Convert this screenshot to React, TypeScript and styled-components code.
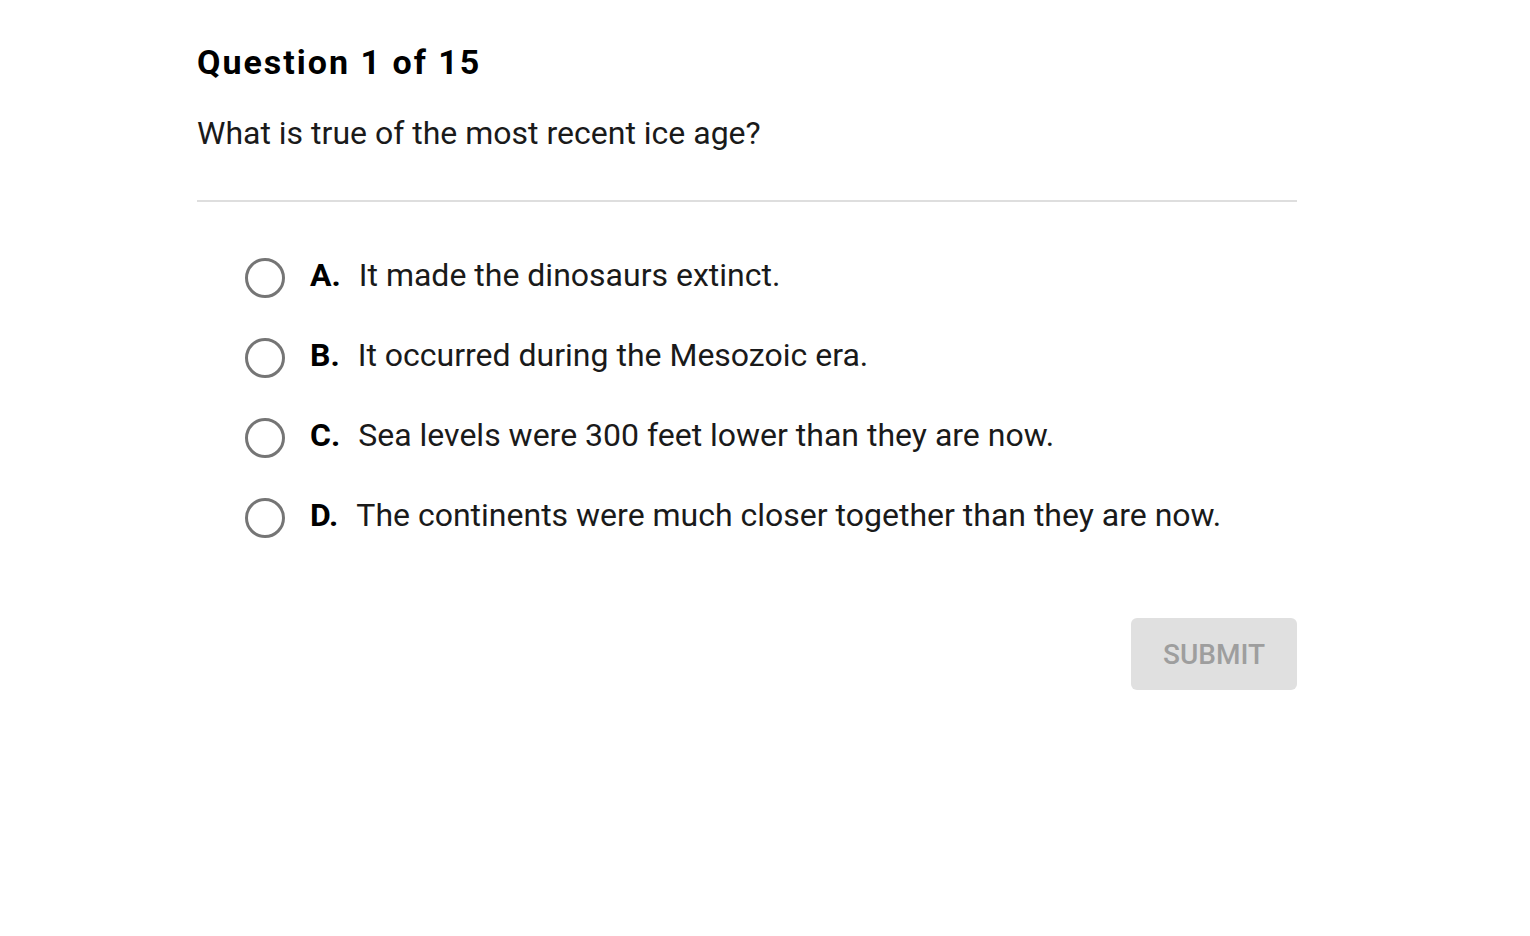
import styled, { createGlobalStyle } from "styled-components";

const options = [
  { letter: "A.", text: "It made the dinosaurs extinct." },
  { letter: "B.", text: "It occurred during the Mesozoic era." },
  { letter: "C.", text: "Sea levels were 300 feet lower than they are now." },
  { letter: "D.", text: "The continents were much closer together than they are now." },
];

function App() {
  return (
    <>
      <GlobalStyle />
      <Page>
        <Title>Question 1 of 15</Title>
        <Prompt>What is true of the most recent ice age?</Prompt>
        <Divider />
        <OptionList>
          {options.map((option) => (
            <Option key={option.letter}>
              <Radio />
              <Letter>{option.letter}</Letter>
              <OptionText>{option.text}</OptionText>
            </Option>
          ))}
        </OptionList>
        <Footer>
          <SubmitButton disabled>SUBMIT</SubmitButton>
        </Footer>
      </Page>
    </>
  );
}

const GlobalStyle = createGlobalStyle`
  body {
    margin: 0;
    background: #ffffff;
    font-family: Roboto, "Liberation Sans", sans-serif;
    color: #1a1a1a;
  }
`;

const Page = styled.div`
  width: 1100px;
  margin-left: 197px;
  padding-top: 40px;
  display: flex;
  flex-direction: column;
`;

const Title = styled.h1`
  margin: 0;
  font-size: 34px;
  font-weight: 700;
  letter-spacing: 2px;
  line-height: 44px;
  color: #000;
`;

const Prompt = styled.p`
  margin: 29px 0 0;
  font-size: 32px;
  line-height: 40px;
  color: #1a1a1a;
`;

const Divider = styled.hr`
  margin: 47px 0 0;
  border: none;
  border-top: 2px solid #dedede;
`;

const OptionList = styled.div`
  display: flex;
  flex-direction: column;
  gap: 40px;
  margin-top: 53px;
  padding-left: 48px;
`;

const Option = styled.label`
  display: flex;
  align-items: center;
  height: 40px;
  cursor: pointer;
`;

const Radio = styled.span`
  width: 34px;
  height: 34px;
  border: 3px solid #757575;
  border-radius: 50%;
  flex-shrink: 0;
  margin-top: 6px;
`;

const Letter = styled.span`
  margin-left: 25px;
  margin-right: 18px;
  font-size: 32px;
  font-weight: 700;
  color: #000;
`;

const OptionText = styled.span`
  font-size: 32px;
  color: #1a1a1a;
`;

const Footer = styled.div`
  display: flex;
  justify-content: flex-end;
  margin-top: 83px;
`;

const SubmitButton = styled.button`
  width: 166px;
  height: 72px;
  border: none;
  border-radius: 6px;
  background: #e0e0e0;
  color: #9e9e9e;
  font-family: Roboto, "Liberation Sans", sans-serif;
  font-size: 28px;
  font-weight: 500;
`;

export default App;
